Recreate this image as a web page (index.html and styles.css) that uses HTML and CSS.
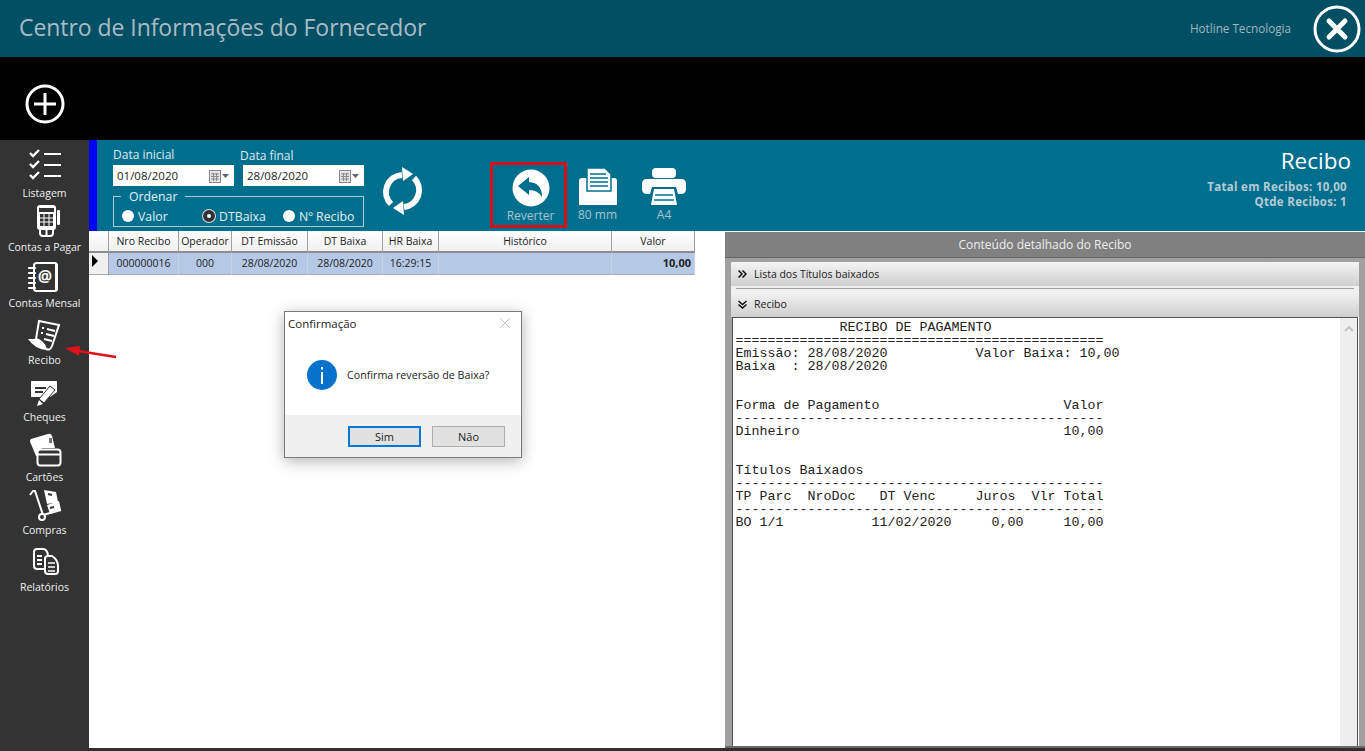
FILE: index.html
```html
<!DOCTYPE html>
<html lang="pt-BR">
<head>
    <meta charset="UTF-8">
    <title>Centro de Informações do Fornecedor</title>
    <link rel="stylesheet" href="styles.css">
</head>
<body>
    <header class="topbar">
        <h1>Centro de Informações do Fornecedor</h1>
        <span class="company">Hotline Tecnologia</span>
        <svg class="close-icon" width="48" height="48" viewBox="0 0 48 48">
            <circle cx="24" cy="24" r="22" fill="none" stroke="#fff" stroke-width="3"/>
            <path d="M16 16 L32 32 M32 16 L16 32" stroke="#fff" stroke-width="5" stroke-linecap="round"/>
        </svg>
    </header>

    <div class="blackbar">
        <svg width="40" height="40" viewBox="0 0 40 40">
            <circle cx="20" cy="20" r="18" fill="none" stroke="#fff" stroke-width="3"/>
            <path d="M20 9 V31 M9 20 H31" stroke="#fff" stroke-width="3"/>
        </svg>
    </div>

    <div class="main">
        <!-- Side menu: each svg uses page coordinates in its viewBox -->
        <nav class="sidebar">
            <div class="nav-item">
                <svg width="89" height="46" viewBox="0 140 89 46" fill="none" stroke="#fff">
                    <path d="M30 153 L33 156 L39 150 M30 164 L33 167 L39 161 M30 175 L33 178 L39 172" stroke-width="2.4"/>
                    <path d="M44 154 H61 M44 165 H61 M44 176 H61" stroke-width="2"/>
                </svg>
                <span>Listagem</span>
            </div>
            <div class="nav-item">
                <svg width="89" height="40" viewBox="0 200 89 40">
                    <rect x="37" y="205" width="19" height="25" rx="3" fill="#fff"/>
                    <rect x="39" y="208" width="15" height="4" fill="#333"/>
                    <path d="M40 214 H53 V226 H40 Z" fill="#333"/>
                    <path d="M44 214 V226 M49 214 V226 M40 218 H53 M40 222 H53" stroke="#fff" stroke-width="1"/>
                    <rect x="57" y="210" width="3" height="15" rx="1" fill="#fff"/>
                    <path d="M40 230 V233 Q40 236 43 236 H50 Q53 236 53 233 V230 M46.500 230 V235" fill="none" stroke="#fff" stroke-width="2"/>
                </svg>
                <span>Contas a Pagar</span>
            </div>
            <div class="nav-item">
                <svg width="89" height="42" viewBox="0 254 89 42">
                    <rect x="34" y="263" width="23" height="28" rx="2.500" fill="none" stroke="#fff" stroke-width="2"/>
                    <rect x="55" y="264" width="3" height="26" fill="#fff"/>
                    <path d="M29 268 H35 M29 273 H35 M29 278 H35 M29 283 H35 M29 288 H35" stroke="#fff" stroke-width="2.200" stroke-linecap="round"/>
                    <text x="45" y="282" class="at-sign">@</text>
                </svg>
                <span>Contas Mensal</span>
            </div>
            <div class="nav-item">
                <svg width="89" height="43" viewBox="0 310 89 43">
                    <path d="M39 321 L59 325 L52 346 Q50 351 46 349 Q44 342 36 339 Z" fill="#333" stroke="#fff" stroke-width="2"/>
                    <path d="M28 339 L38 339 Q44 342 46 350 Q35 349 28 339 Z" fill="#fff"/>
                    <path d="M42 328 H44 M47 329 L55 331 M41 333 H43 M46 334 L54 336 M44 339 L52 341" stroke="#fff" stroke-width="2"/>
                </svg>
                <span>Recibo</span>
            </div>
            <div class="nav-item">
                <svg width="89" height="43" viewBox="0 367 89 43">
                    <path d="M31 381 H57 V392 L50 397 H31 Z" fill="#fff"/>
                    <path d="M35 388 H46 M35 392 H43" stroke="#333" stroke-width="2"/>
                    <path d="M50 386 L55 390 L44 403 L39 399 Z" fill="#fff" stroke="#333"/>
                    <path d="M39 400 L37 406 L43 404 Z" fill="#fff"/>
                </svg>
                <span>Cheques</span>
            </div>
            <div class="nav-item">
                <svg width="89" height="46" viewBox="0 424 89 46">
                    <path d="M31 439 Q29 441 31 444 L36 456 H37 Q37 449 43 448 H55 L52 436 Q51 433 48 434 Z" fill="#fff"/>
                    <rect x="49" y="438" width="3" height="5" fill="#777"/>
                    <rect x="37.500" y="449.500" width="23" height="16" rx="3" fill="none" stroke="#fff" stroke-width="2"/>
                    <path d="M38 454.500 H60" stroke="#fff" stroke-width="2"/>
                </svg>
                <span>Cartões</span>
            </div>
            <div class="nav-item">
                <svg width="89" height="39" viewBox="0 484 89 39">
                    <path d="M30 495 L33 491 H35 L43 515 L61 510" fill="none" stroke="#fff" stroke-width="2"/>
                    <circle cx="42" cy="517" r="3" fill="#333" stroke="#fff" stroke-width="2"/>
                    <path d="M44 490 L56 492 L58 502 L47 504 Z M47 505 L59 501 L61 510 L50 514 Z" fill="#fff"/>
                    <path d="M48 494 L52 495 M50 508 L54 507" stroke="#333" stroke-width="2"/>
                </svg>
                <span>Compras</span>
            </div>
            <div class="nav-item">
                <svg width="89" height="43" viewBox="0 537 89 43">
                    <path d="M44 569 H37 Q34 569 34 566 V552 Q34 549 37 549 H43 Q47 549 48 555" fill="none" stroke="#fff" stroke-width="2"/>
                    <path d="M37 556 H42 M37 560 H42 M37 564 H42" stroke="#fff" stroke-width="2"/>
                    <path d="M48 556 H52 Q58 560 58 566 V571 Q58 574 55 574 H48 Q45 574 45 571 V559 Q45 556 48 556 Z" fill="none" stroke="#fff" stroke-width="2"/>
                    <path d="M48 563 H55 M48 567 H55 M48 571 H55" stroke="#fff" stroke-width="1.600"/>
                </svg>
                <span>Relatórios</span>
            </div>
        </nav>

        <div class="content">
            <section class="toolbar">
                <div class="filters">
                    <div class="date-row">
                        <div class="date-field">
                            <label>Data inicial</label>
                            <div class="date-input">
                                <span>01/08/2020</span>
                                <svg width="22" height="14" viewBox="0 0 22 14">
                                    <rect x="0.500" y="1.500" width="11" height="12" fill="#e4e4e4" stroke="#8a8a8a"/>
                                    <path d="M2 5 H10 M2 7.500 H10 M2 10 H10 M4.500 4 V12 M7.500 4 V12" stroke="#8a8a8a"/>
                                    <path d="M13 5 H20 L16.500 9 Z" fill="#5c6670"/>
                                </svg>
                            </div>
                        </div>
                        <div class="date-field date-final">
                            <label>Data final</label>
                            <div class="date-input">
                                <span>28/08/2020</span>
                                <svg width="22" height="14" viewBox="0 0 22 14">
                                    <rect x="0.500" y="1.500" width="11" height="12" fill="#e4e4e4" stroke="#8a8a8a"/>
                                    <path d="M2 5 H10 M2 7.500 H10 M2 10 H10 M4.500 4 V12 M7.500 4 V12" stroke="#8a8a8a"/>
                                    <path d="M13 5 H20 L16.500 9 Z" fill="#5c6670"/>
                                </svg>
                            </div>
                        </div>
                    </div>
                    <fieldset class="order-box">
                        <legend>Ordenar</legend>
                        <span class="radio radio-valor"><i></i>Valor</span>
                        <span class="radio radio-dt"><i class="checked"></i>DTBaixa</span>
                        <span class="radio"><i></i>Nº Recibo</span>
                    </fieldset>
                </div>

                <svg class="refresh-icon" width="44" height="48" viewBox="0 0 44 48">
                    <path d="M10 37 A17 17 0 0 1 21 8" fill="none" stroke="#fff" stroke-width="6"/>
                    <path d="M21 0 L32 7 L22 14 Z" fill="#fff"/>
                    <path d="M33 11 A17 17 0 0 1 23 40" fill="none" stroke="#fff" stroke-width="6"/>
                    <path d="M23 48 L12 41 L22 34 Z" fill="#fff"/>
                </svg>

                <div class="tool-btn tool-reverter">
                    <svg width="38" height="38" viewBox="0 0 38 38">
                        <circle cx="19" cy="19" r="18.500" fill="#fff"/>
                        <path d="M6 17 L17 8 V13 Q30 14 30 28 Q26 21 17 21 V26 Z" fill="#006f8e"/>
                    </svg>
                    <span>Reverter</span>
                </div>
                <div class="tool-btn tool-80">
                    <svg width="38" height="37" viewBox="0 0 38 37">
                        <path d="M3 10 H35 Q38 10 38 13 V37 H0 V13 Q0 10 3 10 Z" fill="#fff"/>
                        <path d="M8 0 H26 L32 6 V23 H8 Z" fill="#fff" stroke="#006f8e" stroke-width="1.500"/>
                        <path d="M11 6 H27 M11 10 H29 M11 14 H29 M11 18 H29" stroke="#006f8e" stroke-width="1.500"/>
                    </svg>
                    <span>80 mm</span>
                </div>
                <div class="tool-btn tool-a4">
                    <svg width="44" height="37" viewBox="0 0 44 37">
                        <rect x="10" y="0" width="24" height="10" rx="4" fill="#fff"/>
                        <path d="M5 11 H39 Q44 11 44 16 V21 Q44 26 39 26 H36 L34 19 H10 L8 26 H5 Q0 26 0 21 V16 Q0 11 5 11 Z" fill="#fff"/>
                        <path d="M12 21 H32 L35 37 H9 Z" fill="#fff"/>
                        <path d="M13 27 H31 M12 32 H32" stroke="#006f8e" stroke-width="1.500"/>
                    </svg>
                    <span>A4</span>
                </div>

                <div class="summary">
                    <h2>Recibo</h2>
                    <p>Tatal em Recibos: 10,00</p>
                    <p>Qtde Recibos: 1</p>
                </div>
            </section>

            <section class="workarea">
                <div class="grid-area">
                    <table class="grid">
                        <colgroup>
                            <col class="c-mark"><col class="c-nro"><col class="c-op"><col class="c-emis">
                            <col class="c-baixa"><col class="c-hr"><col class="c-hist"><col class="c-valor">
                        </colgroup>
                        <thead>
                            <tr>
                                <th></th><th>Nro Recibo</th><th>Operador</th><th>DT Emissão</th>
                                <th>DT Baixa</th><th>HR Baixa</th><th>Histórico</th><th>Valor</th>
                            </tr>
                        </thead>
                        <tbody>
                            <tr>
                                <td class="marker"><i></i></td>
                                <td>000000016</td>
                                <td>000</td>
                                <td>28/08/2020</td>
                                <td>28/08/2020</td>
                                <td>16:29:15</td>
                                <td></td>
                                <td class="money">10,00</td>
                            </tr>
                        </tbody>
                    </table>
                </div>

                <aside class="detail">
                    <div class="detail-title">Conteúdo detalhado do Recibo</div>
                    <div class="detail-body">
                        <div class="accordion">
                            <svg width="9" height="8" viewBox="0 0 9 8">
                                <path d="M0.500 0.500 L4 4 L0.500 7.500 M4.500 0.500 L8 4 L4.500 7.500" fill="none" stroke="#111" stroke-width="1.500"/>
                            </svg>
                            Lista dos Títulos baixados
                        </div>
                        <div class="accordion-gap"></div>
                        <div class="accordion accordion-open">
                            <svg width="9" height="9" viewBox="0 0 9 9">
                                <path d="M0.500 1 L4.500 4.500 L8.500 1 M0.500 4.500 L4.500 8 L8.500 4.500" fill="none" stroke="#111" stroke-width="1.500"/>
                            </svg>
                            Recibo
                        </div>
                        <div class="receipt">
<pre>             RECIBO DE PAGAMENTO
==============================================
Emissão: 28/08/2020           Valor Baixa: 10,00
Baixa  : 28/08/2020


Forma de Pagamento                       Valor
----------------------------------------------
Dinheiro                                 10,00


Títulos Baixados
----------------------------------------------
TP Parc  NroDoc   DT Venc     Juros  Vlr Total
----------------------------------------------
BO 1/1           11/02/2020     0,00     10,00</pre>
                            <div class="scrollbar">
                                <svg width="12" height="8" viewBox="0 0 12 8">
                                    <path d="M2 6 L6 2 L10 6" fill="none" stroke="#c4c4c4" stroke-width="2"/>
                                </svg>
                            </div>
                        </div>
                    </div>
                </aside>
            </section>
            <div class="bottom-line"></div>
        </div>
    </div>

    <!-- Confirmation dialog -->
    <div class="dialog">
        <div class="dialog-title">
            <span>Confirmação</span>
            <svg width="12" height="12" viewBox="0 0 12 12">
                <path d="M1 1 L11 11 M11 1 L1 11" stroke="#c8c8c8" stroke-width="1"/>
            </svg>
        </div>
        <div class="dialog-msg">
            <svg width="30" height="30" viewBox="0 0 30 30">
                <circle cx="15" cy="15" r="15" fill="#0672cb"/>
                <rect x="14" y="12" width="2" height="12" fill="#fff"/>
                <rect x="14" y="7" width="2" height="2.500" fill="#fff"/>
            </svg>
            <span>Confirma reversão de Baixa?</span>
        </div>
        <div class="dialog-buttons">
            <button class="btn-default">Sim</button>
            <button>Não</button>
        </div>
    </div>

    <!-- Red arrow annotation over the menu -->
    <svg class="red-arrow" width="60" height="20" viewBox="0 0 60 20">
        <path d="M56 14 L18 8" stroke="#e0111a" stroke-width="2.500"/>
        <path d="M5 5 L20 3 L19 13 Z" fill="#e0111a"/>
    </svg>
</body>
</html>
```

FILE: styles.css
```css
* {
    box-sizing: border-box;
}

body {
    margin: 0;
    height: 751px;
    overflow: hidden;
    display: flex;
    flex-direction: column;
    font-family: "Open Sans", "Noto Sans", sans-serif;
    font-size: 11px;
    background-color: #fff;
    color: #222;
}

svg {
    display: block;
    flex: none;
}

.topbar {
    height: 57px;
    flex: none;
    display: flex;
    align-items: center;
    background-color: #004f63;
    padding: 0 4px 3px 19px;
}

.topbar h1 {
    margin: 0;
    flex: 1;
    font-size: 23px;
    font-weight: 400;
    letter-spacing: -0.06px;
    color: #a9bcc4;
}

.company {
    font-size: 11.700px;
    color: #9fb6bf;
    margin-right: 22px;
    margin-top: 2px;
}

.close-icon {
    margin-top: 3px;
}

.blackbar {
    height: 83px;
    flex: none;
    background-color: #000;
    display: flex;
    align-items: center;
    padding: 10px 0 0 25px;
}

.main {
    flex: 1;
    display: flex;
    min-height: 0;
}

.sidebar {
    width: 89px;
    flex: none;
    background-color: #333;
}

.nav-item {
    display: flex;
    flex-direction: column;
    align-items: center;
    color: #eee;
    font-size: 10.500px;
    line-height: 14px;
}

.at-sign {
    font-family: "Open Sans", sans-serif;
    font-size: 16px;
    font-weight: 700;
    fill: #fff;
    text-anchor: middle;
}

.content {
    flex: 1;
    display: flex;
    flex-direction: column;
    min-width: 0;
}

/* toolbar */
.toolbar {
    height: 91px;
    flex: none;
    display: flex;
    background-color: #006f8e;
    border-left: 8px solid #0000ff;
    padding-left: 16px;
}

.filters {
    width: 251px;
    flex: none;
    padding-top: 7px;
}

.date-row {
    display: flex;
}

.date-field {
    width: 121px;
    color: #dfeaee;
    font-size: 12px;
}

.date-final {
    margin-left: 9px;
}

.date-field label {
    display: block;
    height: 18px;
    line-height: 16px;
}

.date-final label {
    line-height: 18px;
    margin-left: -3px;
}

.date-input {
    height: 21px;
    background-color: #fff;
    color: #222;
    font-size: 11.500px;
    display: flex;
    align-items: center;
    justify-content: space-between;
    padding: 0 3px 0 4px;
}

.order-box {
    margin: 4px 0 0;
    padding: 0 0 0 8px;
    height: 37px;
    border: 1px solid #a9c8d4;
    display: flex;
    align-items: center;
    color: #e3eef2;
    font-size: 12.300px;
}

.order-box legend {
    margin-left: -1px;
    padding: 0 8px;
    line-height: 13px;
}

.radio {
    display: flex;
    align-items: center;
    gap: 4px;
    white-space: nowrap;
    margin-top: 3px;
}

.radio-valor {
    width: 81px;
}

.radio-dt {
    width: 80px;
}

.radio i {
    width: 12px;
    height: 12px;
    border-radius: 50%;
    background-color: #fff;
}

.radio i.checked {
    border: 4px solid #333;
    background-color: #fff;
    box-shadow: 0 0 0 1px #ddd;
}

.refresh-icon {
    margin: 27px 0 0 17px;
}

.tool-btn {
    display: flex;
    flex-direction: column;
    align-items: center;
    color: #a9c4cf;
    font-size: 12px;
    line-height: 16px;
}

.tool-reverter {
    width: 77px;
    height: 66px;
    margin: 22px 0 0 65px;
    padding: 4px 0 0 4px;
    gap: 1px;
    border: 3px solid #d2111a;
}

.tool-80 {
    margin: 28px 0 0 11px;
    gap: 2px;
}

.tool-a4 {
    margin: 28px 0 0 25px;
    gap: 2px;
}

.summary {
    flex: 1;
    text-align: right;
    padding: 7px 14px 0 0;
    color: #b5cbd4;
    font-size: 11.500px;
    font-weight: 700;
    letter-spacing: 0.3px;
    line-height: 15px;
}

.summary h2 {
    margin: 0 0 5px;
    font-size: 22.500px;
    font-weight: 400;
    letter-spacing: 0;
    line-height: 27px;
    color: #fff;
}

.summary p {
    margin: 0 4px 0 0;
}

/* work area */
.workarea {
    flex: 1;
    display: flex;
    min-height: 0;
}

.grid-area {
    width: 636px;
    flex: none;
}

.grid {
    width: 606px;
    table-layout: fixed;
    border-collapse: separate;
    border-spacing: 0;
    font-size: 10.500px;
}

.c-mark { width: 20px; }
.c-nro { width: 70px; }
.c-op { width: 53px; }
.c-emis { width: 76px; }
.c-baixa { width: 75px; }
.c-hr { width: 56px; }
.c-hist { width: 173px; }
.c-valor { width: 83px; }

.grid th {
    height: 22px;
    padding: 0 0 1px;
    font-weight: 400;
    background: linear-gradient(#fff, #f0f0f0);
    border-right: 1px solid #a0a0a0;
    border-bottom: 2px solid #8c8c8c;
}

.grid td {
    height: 22px;
    padding: 0 0 2px;
    text-align: center;
    background-color: #b5c9e6;
    border-right: 1px solid #c8d4e6;
    border-bottom: 1px solid #a8a8a8;
}

.grid td.marker {
    background-color: #f0f0f0;
    border-right: 1px solid #a0a0a0;
    vertical-align: top;
    padding: 2px 0 0 3px;
}

.marker i {
    display: block;
    width: 0;
    height: 0;
    border-left: 6px solid #000;
    border-top: 6px solid transparent;
    border-bottom: 6px solid transparent;
}

.grid td.money {
    text-align: right;
    font-weight: 700;
    font-size: 11px;
    padding-right: 3px;
}

.detail {
    flex: 1;
    display: flex;
    flex-direction: column;
    min-width: 0;
    background-color: #a0a0a0;
    border-bottom: 2px solid #6a6a6a;
}

.detail-title {
    height: 27px;
    flex: none;
    background-color: #808080;
    border-top: 1px solid #fff;
    border-bottom: 1px solid #666;
    color: #eee;
    font-size: 12px;
    line-height: 25px;
    text-align: center;
}

.detail-body {
    flex: 1;
    display: flex;
    flex-direction: column;
    min-height: 0;
    padding: 4px 6px 0;
}

.accordion {
    height: 24px;
    flex: none;
    display: flex;
    align-items: center;
    gap: 7px;
    background: linear-gradient(#f4f4f4, #cfcfcf);
    font-size: 10.500px;
    padding-left: 7px;
    color: #222;
}

.accordion-open {
    height: 26px;
}

.accordion-gap {
    height: 5px;
    flex: none;
    background-color: #f0f0f0;
    padding: 2px 5px;
}

.accordion-gap::after {
    content: "";
    display: block;
    height: 1px;
    background-color: #a0a0a0;
}

.receipt {
    flex: 1;
    display: flex;
    min-height: 0;
    background-color: #fff;
    border: 1px solid #555;
    border-bottom: none;
    margin: 0 1px;
    box-shadow: 1px 0 0 #fff;
}

.receipt pre {
    flex: 1;
    margin: 0;
    padding: 3px 0 0 2.500px;
    font-family: "Liberation Mono", monospace;
    font-size: 13.333px;
    line-height: 13px;
    color: #222;
}

.scrollbar {
    width: 17px;
    flex: none;
    background-color: #eee;
    padding: 7px 0 0 3px;
}

.bottom-line {
    height: 3px;
    flex: none;
    background-color: #2f2f2f;
}

/* dialog */
.dialog {
    position: absolute;
    left: 284px;
    top: 311px;
    width: 238px;
    height: 147px;
    display: flex;
    flex-direction: column;
    background-color: #fff;
    border: 1px solid #7a7a7a;
    box-shadow: 0 3px 14px rgba(0, 0, 0, 0.3);
}

.dialog-title {
    height: 22px;
    display: flex;
    align-items: center;
    justify-content: space-between;
    padding: 0 10px 0 3px;
    font-size: 11.500px;
    color: #222;
}

.dialog-msg {
    height: 81px;
    display: flex;
    align-items: center;
    gap: 10px;
    padding: 0 0 0 22px;
    font-size: 10.700px;
}

.dialog-buttons {
    flex: 1;
    background-color: #f0f0f0;
    display: flex;
    justify-content: flex-end;
    gap: 11px;
    padding: 11px 16px 0 0;
}

.dialog-buttons button {
    width: 73px;
    height: 21px;
    padding: 0;
    background-color: #e1e1e1;
    border: 1px solid #adadad;
    font-family: inherit;
    font-size: 11px;
    color: #222;
}

.dialog-buttons .btn-default {
    border: 2px solid #0078d7;
}

.red-arrow {
    position: absolute;
    left: 60px;
    top: 343px;
}
```
